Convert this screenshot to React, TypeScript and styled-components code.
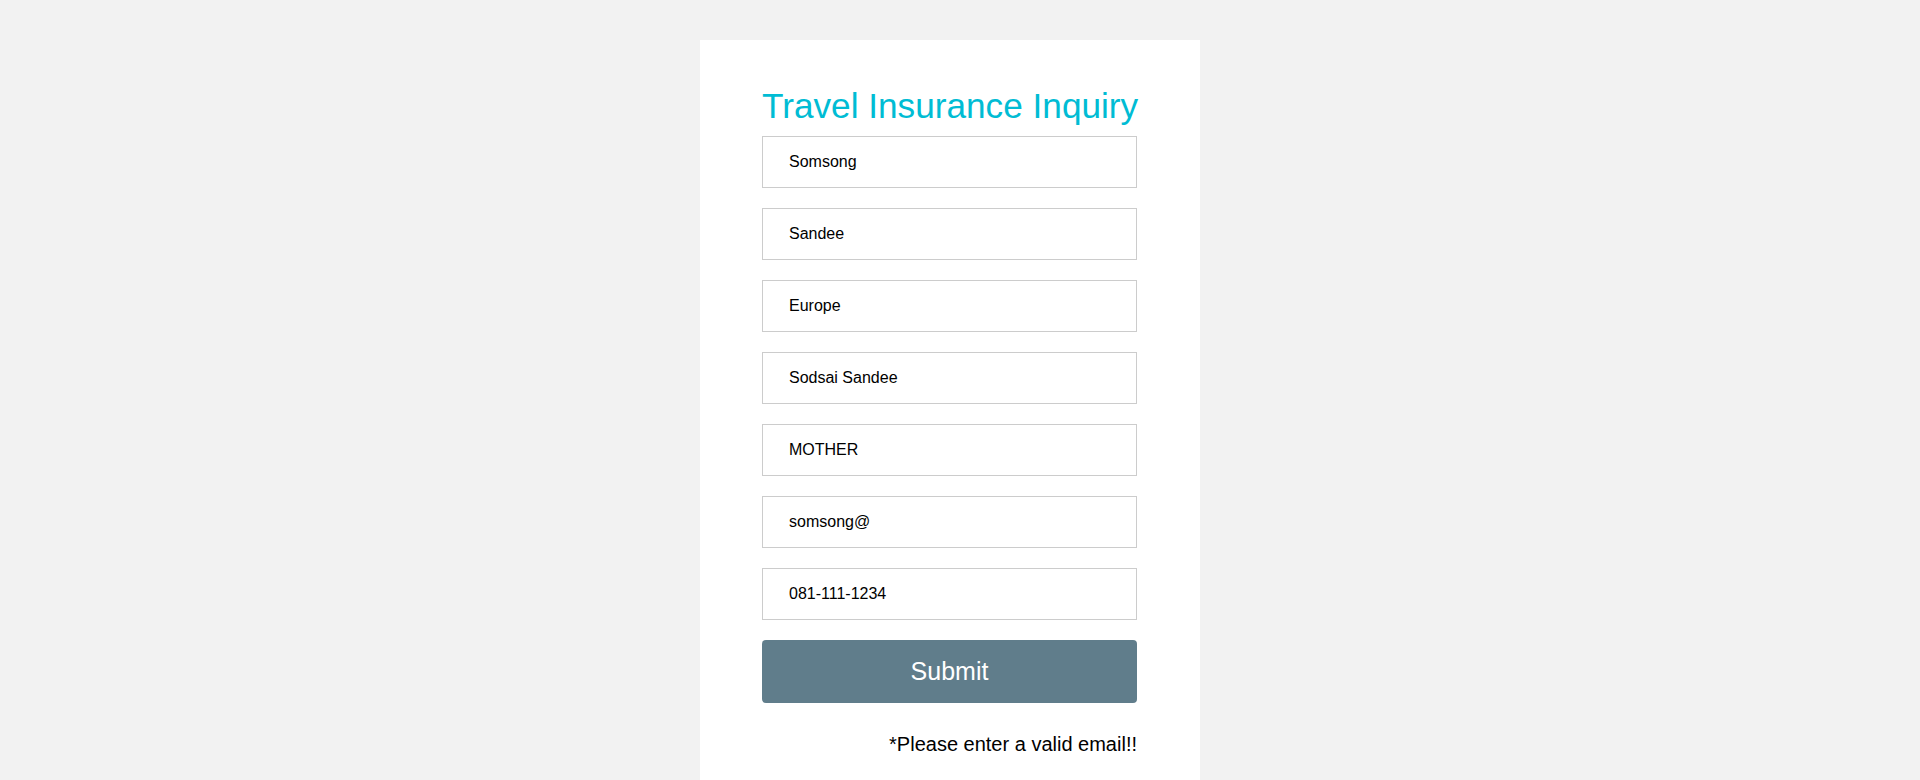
import React from "react";
import styled, { createGlobalStyle } from "styled-components";

const GlobalStyle = createGlobalStyle`
  html, body {
    margin: 0;
    padding: 0;
    background: #f2f2f2;
    font-family: "Liberation Sans", Arial, sans-serif;
  }
`;

const Page = styled.div`
  display: flex;
  justify-content: center;
  padding: 40px 20px 40px 0;
`;

const Card = styled.form`
  width: 500px;
  box-sizing: border-box;
  background: #ffffff;
  padding: 42px 63px 80px 62px;
  display: flex;
  flex-direction: column;
`;

const Title = styled.h1`
  margin: 0 0 6px 0;
  font-size: 35.2px;
  font-weight: 400;
  line-height: 48px;
  color: #00bcd4;
  white-space: nowrap;
`;

const Field = styled.input`
  box-sizing: border-box;
  width: 100%;
  height: 52px;
  margin: 0 0 20px 0;
  padding: 0 26px;
  border: 1px solid #cccccc;
  background: #ffffff;
  font-family: "Liberation Sans", Arial, sans-serif;
  font-size: 16px;
  color: #000000;
  outline: none;
`;

const SubmitButton = styled.button`
  height: 63px;
  width: 100%;
  border: none;
  border-radius: 4px;
  background: #607d8b;
  color: #ffffff;
  font-family: "Liberation Sans", Arial, sans-serif;
  font-size: 25px;
  cursor: pointer;
`;

const ErrorText = styled.p`
  margin: 29px 0 0 0;
  text-align: right;
  font-size: 20px;
  line-height: 24px;
  color: #000000;
`;

const values = [
  "Somsong",
  "Sandee",
  "Europe",
  "Sodsai Sandee",
  "MOTHER",
  "somsong@",
  "081-111-1234",
];

export default function App() {
  return (
    <>
      <GlobalStyle />
      <Page>
        <Card onSubmit={(e) => e.preventDefault()}>
          <Title>Travel Insurance Inquiry</Title>
          {values.map((v, i) => (
            <Field key={i} type="text" defaultValue={v} />
          ))}
          <SubmitButton type="submit">Submit</SubmitButton>
          <ErrorText>*Please enter a valid email!!</ErrorText>
        </Card>
      </Page>
    </>
  );
}
